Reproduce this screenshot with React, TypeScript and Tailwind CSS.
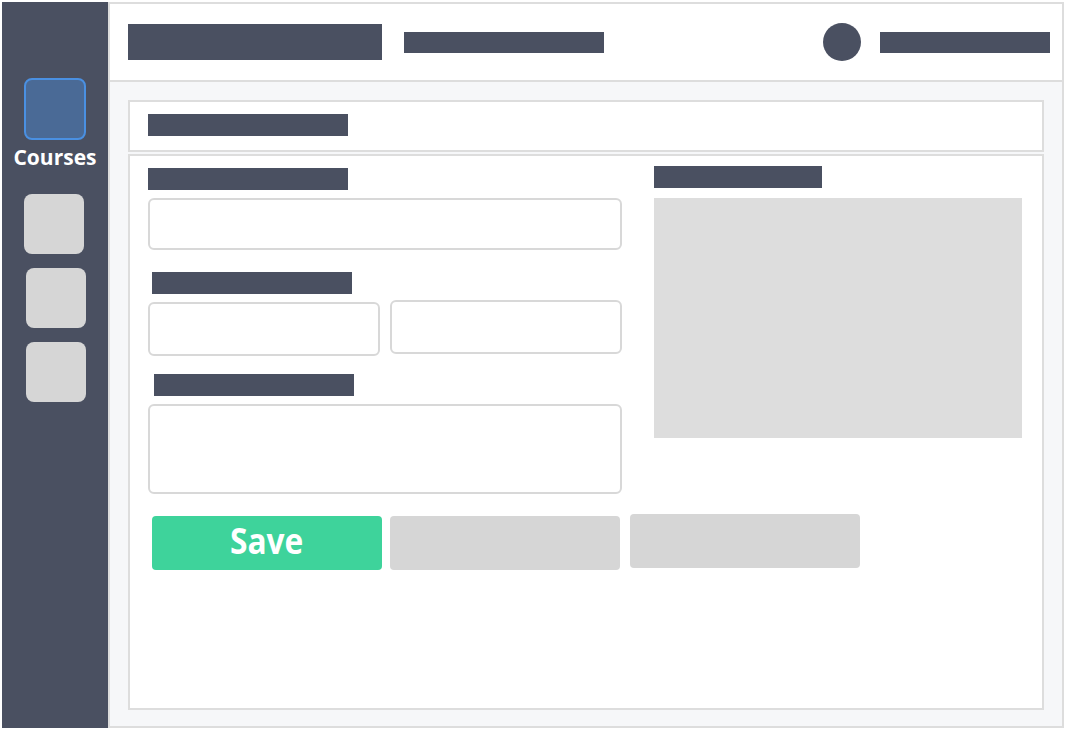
import React from "react";

const DARK = "bg-[#4a5061]";

export default function App() {
  return (
    <div className="flex h-[730px] w-[1066px] bg-white p-[2px]" style={{ fontFamily: '"Open Sans", "Noto Sans", sans-serif' }}>
      {/* Sidebar */}
      <aside className={`flex w-[106px] shrink-0 flex-col items-start ${DARK} pt-[76px]`}>
        <div className="ml-[22px] h-[62px] w-[62px] rounded-[8px] border-2 border-[#4a90e2] bg-[#4a6a96]" />
        <div className="mt-[5px] w-full text-center text-[21px] font-bold leading-[24px] text-white">Courses</div>
        <div className="ml-[22px] mt-[25px] h-[60px] w-[60px] rounded-[8px] bg-[#d6d6d6]" />
        <div className="ml-[24px] mt-[14px] h-[60px] w-[60px] rounded-[8px] bg-[#d6d6d6]" />
        <div className="ml-[24px] mt-[14px] h-[60px] w-[60px] rounded-[8px] bg-[#d6d6d6]" />
      </aside>

      {/* Main */}
      <main className="flex flex-1 flex-col border-2 border-[#dddddd]">
        {/* Header */}
        <header className="flex h-[78px] shrink-0 items-center border-b-2 border-[#dddddd] bg-white pl-[18px] pr-[12px]">
          <div className={`h-[36px] w-[254px] ${DARK}`} />
          <div className={`ml-[22px] h-[21px] w-[200px] ${DARK}`} />
          <div className="flex-1" />
          <div className={`h-[38px] w-[38px] rounded-full ${DARK}`} />
          <div className={`ml-[19px] h-[21px] w-[170px] ${DARK}`} />
        </header>

        {/* Content */}
        <section className="flex flex-1 flex-col gap-[2px] bg-[#f6f7f9] px-[18px] pb-[16px] pt-[18px]">
          <div className="h-[52px] border-2 border-[#dddddd] bg-white pl-[18px] pt-[12px]">
            <div className={`h-[22px] w-[200px] ${DARK}`} />
          </div>

          <div className="flex-1 border-2 border-[#dddddd] bg-white pl-[18px] pt-[10px]">
            <div className="flex gap-[32px]">
              {/* Left column */}
              <div className="flex w-[474px] flex-col pt-[2px]">
                <div className={`h-[22px] w-[200px] ${DARK}`} />
                <div className="mt-[8px] h-[52px] w-[474px] rounded-[6px] border-2 border-[#d8d8d8] bg-white" />
                <div className={`ml-[4px] mt-[22px] h-[22px] w-[200px] ${DARK}`} />
                <div className="mt-[6px] flex items-start gap-[10px]">
                  <div className="mt-[2px] h-[54px] w-[232px] rounded-[6px] border-2 border-[#d8d8d8] bg-white" />
                  <div className="h-[54px] w-[232px] rounded-[6px] border-2 border-[#d8d8d8] bg-white" />
                </div>
                <div className={`ml-[6px] mt-[18px] h-[22px] w-[200px] ${DARK}`} />
                <div className="mt-[8px] h-[90px] w-[474px] rounded-[6px] border-2 border-[#d8d8d8] bg-white" />
              </div>

              {/* Right column */}
              <div className="flex flex-col">
                <div className={`h-[22px] w-[168px] ${DARK}`} />
                <div className="mt-[10px] h-[240px] w-[368px] bg-[#dddddd]" />
              </div>
            </div>

            {/* Buttons */}
            <div className="mt-[22px] flex items-start gap-[8px] pl-[4px]">
              <button className="flex h-[54px] w-[230px] items-center justify-center rounded-[4px] bg-[#3ed39b]">
                <span className="-mt-[5px] inline-block scale-x-[0.88] text-[36px] font-bold leading-none text-white">Save</span>
              </button>
              <div className="h-[54px] w-[230px] rounded-[4px] bg-[#d6d6d6]" />
              <div className="-mt-[2px] ml-[2px] h-[54px] w-[230px] rounded-[4px] bg-[#d6d6d6]" />
            </div>
          </div>
        </section>
      </main>
    </div>
  );
}
